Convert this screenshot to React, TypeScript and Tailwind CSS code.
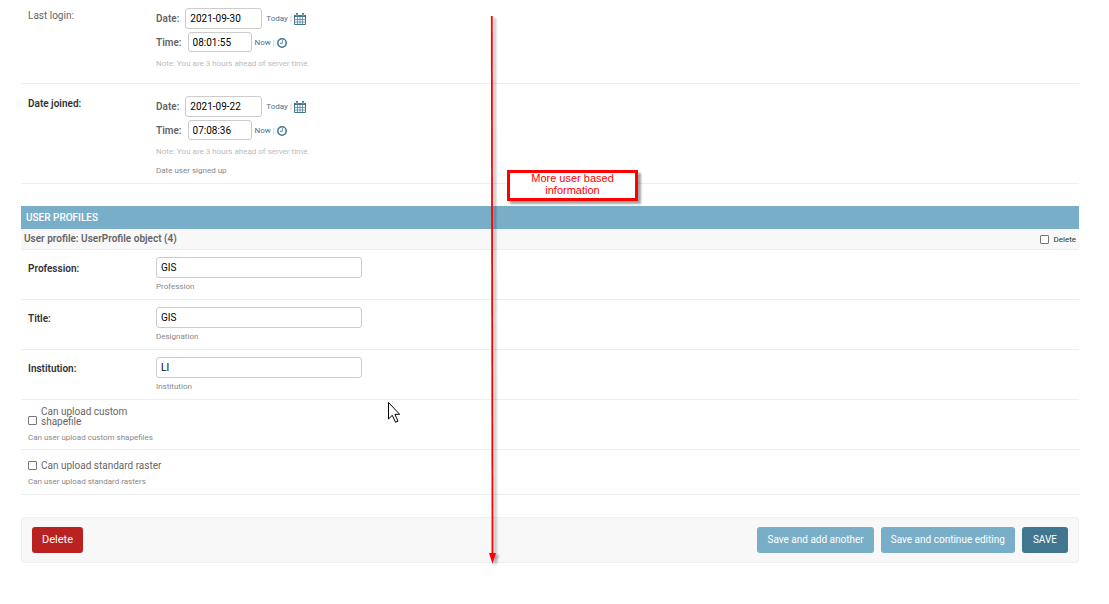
import type { ReactNode } from 'react';

const dateRows: {
  id: string;
  title: string;
  required: boolean;
  date: string;
  time: string;
  help?: string;
}[] = [
  {
    id: 'last_login',
    title: 'Last login:',
    required: false,
    date: '2021-09-30',
    time: '08:01:55',
  },
  {
    id: 'date_joined',
    title: 'Date joined:',
    required: true,
    date: '2021-09-22',
    time: '07:08:36',
    help: 'Date user signed up',
  },
];

const profileFields = [
  { id: 'profession', label: 'Profession:', value: 'GIS', help: 'Profession' },
  { id: 'title', label: 'Title:', value: 'GIS', help: 'Designation' },
  { id: 'institution', label: 'Institution:', value: 'LI', help: 'Institution' },
];

const inputClass =
  'rounded-[3px] border border-[#ccc] bg-white px-1 text-[10px] text-black outline-none';

const checkboxClass =
  'size-[9px] shrink-0 appearance-none rounded-[1px] border border-[#767676] bg-white checked:bg-[#417690]';

const CalendarIcon = () => (
  <svg viewBox="0 0 12 12" className="size-3" fill="none" stroke="#417690">
    <path d="M0.5 2.5h11v9h-11z" />
    <path d="M0 3h12" strokeWidth="2" />
    <path d="M3 0v3M9 0v3" strokeWidth="2" />
    <path d="M3.5 4v8M6 4v8M8.5 4v8M0 6.5h12M0 9h12" strokeWidth="0.7" />
    <path d="M3 1v2M9 1v2" stroke="#fff" strokeWidth="0.6" />
  </svg>
);

const ClockIcon = () => (
  <svg viewBox="0 0 10 10" className="size-[10px]" fill="none" stroke="#417690">
    <circle cx="5" cy="5" r="4.2" strokeWidth="1.5" />
    <path d="M5.3 2.2v3.1H3" strokeWidth="0.9" />
  </svg>
);

const Shortcut = ({ text, icon }: { text: string; icon: ReactNode }) => (
  <span className="flex items-center pt-px text-[8px] text-[#bbb]">
    <a href="#" className="text-[#417690]">
      {text}
    </a>
    <span className="mx-0.5">|</span>
    <a href="#" aria-label={`Choose for ${text}`}>
      {icon}
    </a>
  </span>
);

const Help = ({ children }: { children: ReactNode }) => (
  <p className="text-[8px] leading-3 text-[#888]">{children}</p>
);

export default function App() {
  return (
    <div className="relative bg-white pr-[30px] pb-10 pl-[21px] font-[Roboto,sans-serif] text-[10px] leading-3 text-[#666]">
      <form onSubmit={e => e.preventDefault()}>
        {dateRows.map(row => (
          <div
            key={row.id}
            className="flex border-b border-[#eee] px-[7px] pt-3 pb-1.5 first:pt-2 first:pb-[13px]"
          >
            <div
              className={
                row.required
                  ? 'w-32 shrink-0 pt-0.5 font-semibold text-[#333]'
                  : 'w-32 shrink-0 pt-0.5'
              }
            >
              {row.title}
            </div>
            <div>
              <div className="flex h-[21px] items-center">
                <label
                  htmlFor={`${row.id}_date`}
                  className="mr-1.5 pt-px font-semibold"
                >
                  Date:
                </label>
                <input
                  id={`${row.id}_date`}
                  defaultValue={row.date}
                  className={`${inputClass} mr-1 h-[21px] w-[77px]`}
                />
                <Shortcut text="Today" icon={<CalendarIcon />} />
              </div>
              <div className="mt-[3px] flex h-5 items-center">
                <label
                  htmlFor={`${row.id}_time`}
                  className="mr-1.5 pt-px font-semibold"
                >
                  Time:
                </label>
                <input
                  id={`${row.id}_time`}
                  defaultValue={row.time}
                  className={`${inputClass} mr-[3px] h-5 w-16`}
                />
                <Shortcut text="Now" icon={<ClockIcon />} />
              </div>
              <p className="mt-1.5 text-[8px] leading-3 text-[#bbb]">
                Note: You are 3 hours ahead of server time.
              </p>
              {row.help && (
                <div className="mt-[7px]">
                  <Help>{row.help}</Help>
                </div>
              )}
            </div>
          </div>
        ))}

        <section className="mt-[22px]">
          <h2 className="bg-[#79aec8] px-[5px] pt-[6px] pb-[5px] text-[10px] leading-3 font-medium text-white uppercase">
            User profiles
          </h2>
          <div className="flex h-[21px] items-center justify-between border-b border-[#eee] bg-[#f8f8f8] px-[3px]">
            <h3 className="font-semibold">
              User profile: UserProfile object (4)
            </h3>
            <label className="flex items-center gap-1 pt-px text-[8px] text-[#333]">
              <input type="checkbox" className={checkboxClass} />
              Delete
            </label>
          </div>

          {profileFields.map(field => (
            <div
              key={field.id}
              className="flex border-b border-[#eee] px-[7px] pt-[7px] pb-1.5"
            >
              <label
                htmlFor={field.id}
                className="w-32 shrink-0 pt-1.5 font-semibold text-[#333]"
              >
                {field.label}
              </label>
              <div>
                <input
                  id={field.id}
                  defaultValue={field.value}
                  className={`${inputClass} mb-[3px] block h-[21px] w-[206px]`}
                />
                <Help>{field.help}</Help>
              </div>
            </div>
          ))}

          <div className="border-b border-[#eee] px-[7px] pt-[7px] pb-[5px]">
            <label className="mb-[5px] flex w-28 items-end gap-1 leading-[10px]">
              <input type="checkbox" className={`${checkboxClass} mb-0.5`} />
              Can upload custom shapefile
            </label>
            <Help>Can user upload custom shapefiles</Help>
          </div>
          <div className="border-b border-[#eee] px-[7px] pt-2.5 pb-1.5">
            <label className="mb-1 flex items-center gap-1">
              <input type="checkbox" className={`${checkboxClass} mb-0.5`} />
              Can upload standard raster
            </label>
            <Help>Can user upload standard rasters</Help>
          </div>
        </section>

        <div className="mt-[22px] flex gap-[7px] rounded-[3px] border border-[#eee] bg-[#f8f8f8] px-2.5 py-[9px] text-white">
          <button
            type="button"
            className="mr-auto h-[26px] rounded-[3px] bg-[#ba2121] px-2.5 text-[11px]"
          >
            Delete
          </button>
          <button className="h-[26px] rounded-[3px] bg-[#79aec8] px-2.5">
            Save and add another
          </button>
          <button className="h-[26px] rounded-[3px] bg-[#79aec8] px-2.5">
            Save and continue editing
          </button>
          <button className="h-[26px] rounded-[3px] bg-[#417690] px-[11px] uppercase">
            Save
          </button>
        </div>
      </form>

      {/* annotation arrow running down the page */}
      <svg
        viewBox="0 0 20 560"
        className="pointer-events-none absolute top-2.5 left-[482px] h-[560px] w-5 drop-shadow-[3px_2px_1px_rgba(0,0,0,0.3)]"
      >
        <path d="M9.8 6L10.5 546" stroke="#f00" strokeWidth="1.8" />
        <path d="M7 543h7l-3.5 11z" fill="#f00" />
      </svg>
      <div className="absolute top-[170px] left-[507px] h-[31px] w-[131px] border-[3px] border-[#f00] bg-white shadow-[3px_3px_2px_rgba(0,0,0,0.35)]">
        <p className="-mt-px px-5 text-center font-['Liberation_Sans',Arial,sans-serif] text-[11px] leading-3 text-[#f00]">
          More user based information
        </p>
      </div>

      <svg
        viewBox="0 0 12 21"
        className="pointer-events-none absolute top-[402px] left-[388px] h-[21px] w-3"
      >
        <path
          d="M0.5 0.5v16.5l3.8-3.7 3.2 7 2.5-1.1-3.1-6.9h4.8z"
          fill="#fff"
          stroke="#000"
        />
      </svg>
    </div>
  );
}
